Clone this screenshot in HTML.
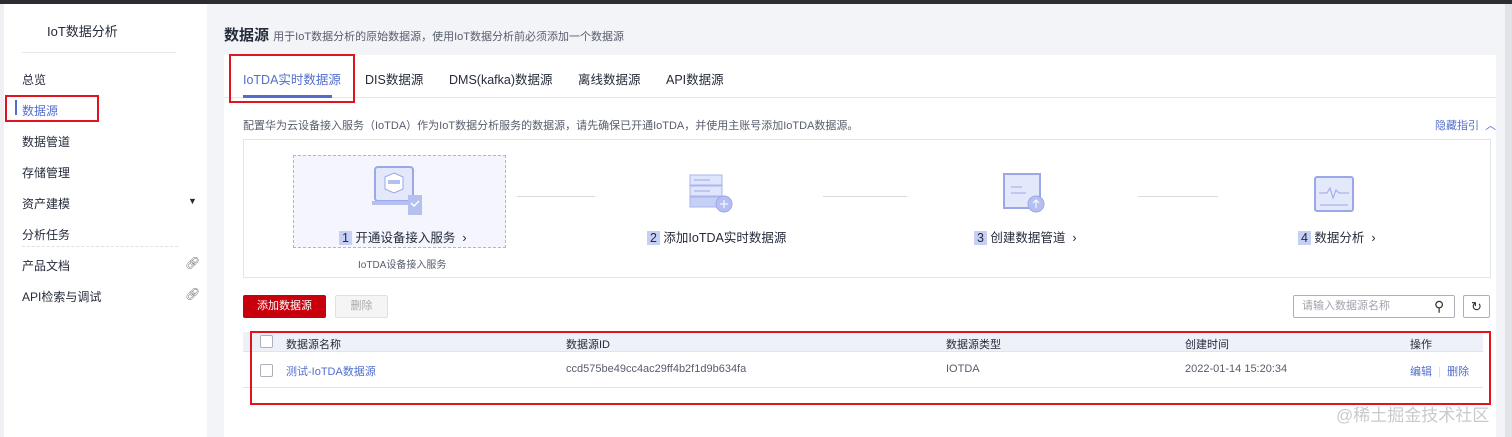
<!DOCTYPE html><html><head><meta charset="utf-8"><style>
*{margin:0;padding:0;box-sizing:border-box}
body{width:1512px;height:437px;overflow:hidden;background:#f3f4f7;font-family:"Liberation Sans","Noto Sans CJK SC",sans-serif;font-size:12px;color:#252b3a;position:relative}
.a{position:absolute;white-space:nowrap}
.blue{color:#526ecc}
</style></head><body>
<div class="a" style="left:0;top:0;width:1512px;height:4px;background:#2b2d33"></div>
<div class="a" style="left:0;top:4px;width:207px;height:433px;background:#fff;border-left:4px solid #eef0f3"></div>
<div class="a" style="left:1505px;top:4px;width:7px;height:433px;background:#e2e3e6"></div>
<div class="a" style="left:47px;top:21px;font-size:13px">IoT数据分析</div>
<div class="a" style="left:22px;top:52px;width:154px;height:1px;background:#e6e8ec"></div>
<div class="a" style="left:22px;top:71px">总览</div>
<div class="a" style="left:15px;top:100px;width:2px;height:15px;background:#526ecc"></div>
<div class="a blue" style="left:22px;top:102px">数据源</div>
<div class="a" style="left:5px;top:95px;width:94px;height:27px;border:2px solid #e0141e"></div>
<div class="a" style="left:22px;top:133px">数据管道</div>
<div class="a" style="left:22px;top:164px">存储管理</div>
<div class="a" style="left:22px;top:195px">资产建模</div>
<div class="a" style="left:188px;top:196px;font-size:9px">▼</div>
<div class="a" style="left:22px;top:226px">分析任务</div>
<div class="a" style="left:22px;top:246px;width:156px;border-top:1px dashed #dfe1e6"></div>
<div class="a" style="left:22px;top:257px">产品文档</div>
<div class="a" style="left:22px;top:288px">API检索与调试</div>
<div class="a" style="left:185px;top:256px;color:#777">🔗︎</div>
<div class="a" style="left:185px;top:287px;color:#777">🔗︎</div>

<div class="a" style="left:224px;top:24px;font-size:15px;font-weight:bold">数据源 <span style="font-size:11px;font-weight:normal;color:#575d6c">用于IoT数据分析的原始数据源，使用IoT数据分析前必须添加一个数据源</span></div>
<div class="a" style="left:224px;top:55px;width:1272px;height:382px;background:#fff"></div>
<div class="a" style="left:224px;top:97px;width:1272px;height:1px;background:#e6e8ec"></div>
<div class="a blue" style="left:243px;top:69px;font-size:12.5px">IoTDA实时数据源</div>
<div class="a" style="left:243px;top:95px;width:89px;height:3px;background:#526ecc"></div>
<div class="a" style="left:229px;top:54px;width:126px;height:49px;border:2px solid #e0141e"></div>
<div class="a" style="left:365px;top:69px;font-size:12.5px">DIS数据源</div>
<div class="a" style="left:449px;top:69px;font-size:12.5px">DMS(kafka)数据源</div>
<div class="a" style="left:578px;top:69px;font-size:12.5px">离线数据源</div>
<div class="a" style="left:666px;top:69px;font-size:12.5px">API数据源</div>
<div class="a" style="left:243px;top:117px;font-size:11px;color:#575d6c">配置华为云设备接入服务（IoTDA）作为IoT数据分析服务的数据源，请先确保已开通IoTDA，并使用主账号添加IoTDA数据源。</div>
<div class="a blue" style="left:1435px;top:117px;font-size:11px">隐藏指引 &nbsp;︿</div>
<div class="a" style="left:243px;top:139px;width:1248px;height:139px;border:1px solid #e2e4e8"></div>
<div class="a" style="left:293px;top:155px;width:213px;height:93px;border:1px dashed #aab4e6;background:#f4f5fd"></div>
<svg class="a" style="left:370px;top:165px" width="56" height="52"><rect x="5" y="2" width="38" height="34" rx="3" fill="#e3e8fb" stroke="#9aa8ea" stroke-width="2"/><rect x="2" y="36" width="44" height="4" fill="#b6c0f0"/><polygon points="24,8 33,12 33,24 24,28 15,24 15,12" fill="#fff" stroke="#9aa8ea"/><rect x="18" y="15" width="12" height="4" fill="#b6c0f0"/><rect x="38" y="30" width="14" height="20" fill="#b6c0f0"/><path d="M41 38l3 3 5-5" stroke="#fff" fill="none" stroke-width="1.5"/></svg>
<svg class="a" style="left:688px;top:173px" width="50" height="42"><rect x="2" y="2" width="32" height="10" fill="#dfe5fb" stroke="#a9b5ec"/><rect x="2" y="13" width="32" height="10" fill="#dfe5fb" stroke="#a9b5ec"/><rect x="2" y="24" width="32" height="10" fill="#c6cff4" stroke="#a9b5ec"/><line x1="6" y1="7" x2="22" y2="7" stroke="#9aa8ea"/><line x1="6" y1="18" x2="22" y2="18" stroke="#9aa8ea"/><circle cx="36" cy="31" r="8" fill="#b6c0f0" stroke="#9aa8ea"/><path d="M36 27v8M32 31h8" stroke="#fff"/></svg>
<svg class="a" style="left:1002px;top:172px" width="46" height="44"><rect x="2" y="2" width="36" height="34" fill="#e3e8fb" stroke="#9aa8ea" stroke-width="2"/><line x1="9" y1="15" x2="20" y2="15" stroke="#9aa8ea"/><line x1="9" y1="21" x2="24" y2="21" stroke="#9aa8ea"/><circle cx="34" cy="32" r="8" fill="#b6c0f0" stroke="#9aa8ea"/><path d="M34 28v8M31 31l3-3 3 3" stroke="#fff" fill="none"/></svg>
<svg class="a" style="left:1314px;top:173px" width="42" height="40"><rect x="1" y="4" width="38" height="34" rx="2" fill="#e3e8fb" stroke="#9aa8ea" stroke-width="2"/><path d="M5 20h8l3-5 3 10 3-8 3 3h10" stroke="#9aa8ea" fill="none"/><line x1="6" y1="32" x2="34" y2="32" stroke="#9aa8ea"/></svg>
<div class="a" style="left:517px;top:196px;width:78px;height:1px;background:#d8dbe2"></div>
<div class="a" style="left:823px;top:196px;width:84px;height:1px;background:#d8dbe2"></div>
<div class="a" style="left:1138px;top:196px;width:80px;height:1px;background:#d8dbe2"></div>
<div class="a" style="left:339px;top:227px;font-size:12.5px"><span style="background:#c6cff4;padding:0 3px">1</span> 开通设备接入服务 &nbsp;›</div>
<div class="a" style="left:358px;top:256px;font-size:10px;color:#575d6c">IoTDA设备接入服务</div>
<div class="a" style="left:647px;top:227px;font-size:12.5px"><span style="background:#c6cff4;padding:0 3px">2</span> 添加IoTDA实时数据源</div>
<div class="a" style="left:974px;top:227px;font-size:12.5px"><span style="background:#c6cff4;padding:0 3px">3</span> 创建数据管道 &nbsp;›</div>
<div class="a" style="left:1298px;top:227px;font-size:12.5px"><span style="background:#c6cff4;padding:0 3px">4</span> 数据分析 &nbsp;›</div>

<div class="a" style="left:243px;top:295px;width:83px;height:23px;background:#c7000b;border-radius:2px;color:#fff;font-size:11px;text-align:center;line-height:23px">添加数据源</div>
<div class="a" style="left:335px;top:295px;width:53px;height:23px;background:#f5f5f6;border:1px solid #e0e1e4;border-radius:2px;color:#aaa;font-size:11px;text-align:center;line-height:21px">删除</div>
<div class="a" style="left:1293px;top:295px;width:162px;height:23px;border:1px solid #adb0b8;border-radius:2px;color:#a0a4ad;font-size:11px;padding-left:8px;line-height:21px">请输入数据源名称<span class="a" style="left:140px;top:0;color:#333;font-size:14px">⚲</span></div>
<div class="a" style="left:1463px;top:295px;width:27px;height:23px;border:1px solid #adb0b8;border-radius:2px;text-align:center;line-height:21px;font-size:13px">↻</div>

<div class="a" style="left:243px;top:332px;width:1240px;height:20px;background:#eef1f7;border-bottom:1px solid #e2e4e8"></div>
<div class="a" style="left:260px;top:335px;width:13px;height:13px;border:1px solid #adb0b8;background:#fff;border-radius:2px"></div>
<div class="a" style="left:286px;top:336px;font-size:11px">数据源名称</div>
<div class="a" style="left:566px;top:336px;font-size:11px">数据源ID</div>
<div class="a" style="left:946px;top:336px;font-size:11px">数据源类型</div>
<div class="a" style="left:1185px;top:336px;font-size:11px">创建时间</div>
<div class="a" style="left:1410px;top:336px;font-size:11px">操作</div>
<div class="a" style="left:260px;top:364px;width:13px;height:13px;border:1px solid #adb0b8;border-radius:2px"></div>
<div class="a blue" style="left:286px;top:363px;font-size:11px">测试-IoTDA数据源</div>
<div class="a" style="left:566px;top:363px;font-size:11px;color:#575d6c">ccd575be49cc4ac29ff4b2f1d9b634fa</div>
<div class="a" style="left:946px;top:363px;font-size:11px;color:#575d6c">IOTDA</div>
<div class="a" style="left:1185px;top:363px;font-size:11px;color:#575d6c">2022-01-14 15:20:34</div>
<div class="a blue" style="left:1410px;top:363px;font-size:11px">编辑 <span style="color:#ddd">&nbsp;|&nbsp;</span> 删除</div>
<div class="a" style="left:243px;top:387px;width:1240px;height:1px;background:#e2e4e8"></div>
<div class="a" style="left:250px;top:331px;width:1241px;height:74px;border:2px solid #e0141e"></div>
<div class="a" style="left:1336px;top:401px;font-size:17px;color:#c8cacd">@稀土掘金技术社区</div>
</body></html>
